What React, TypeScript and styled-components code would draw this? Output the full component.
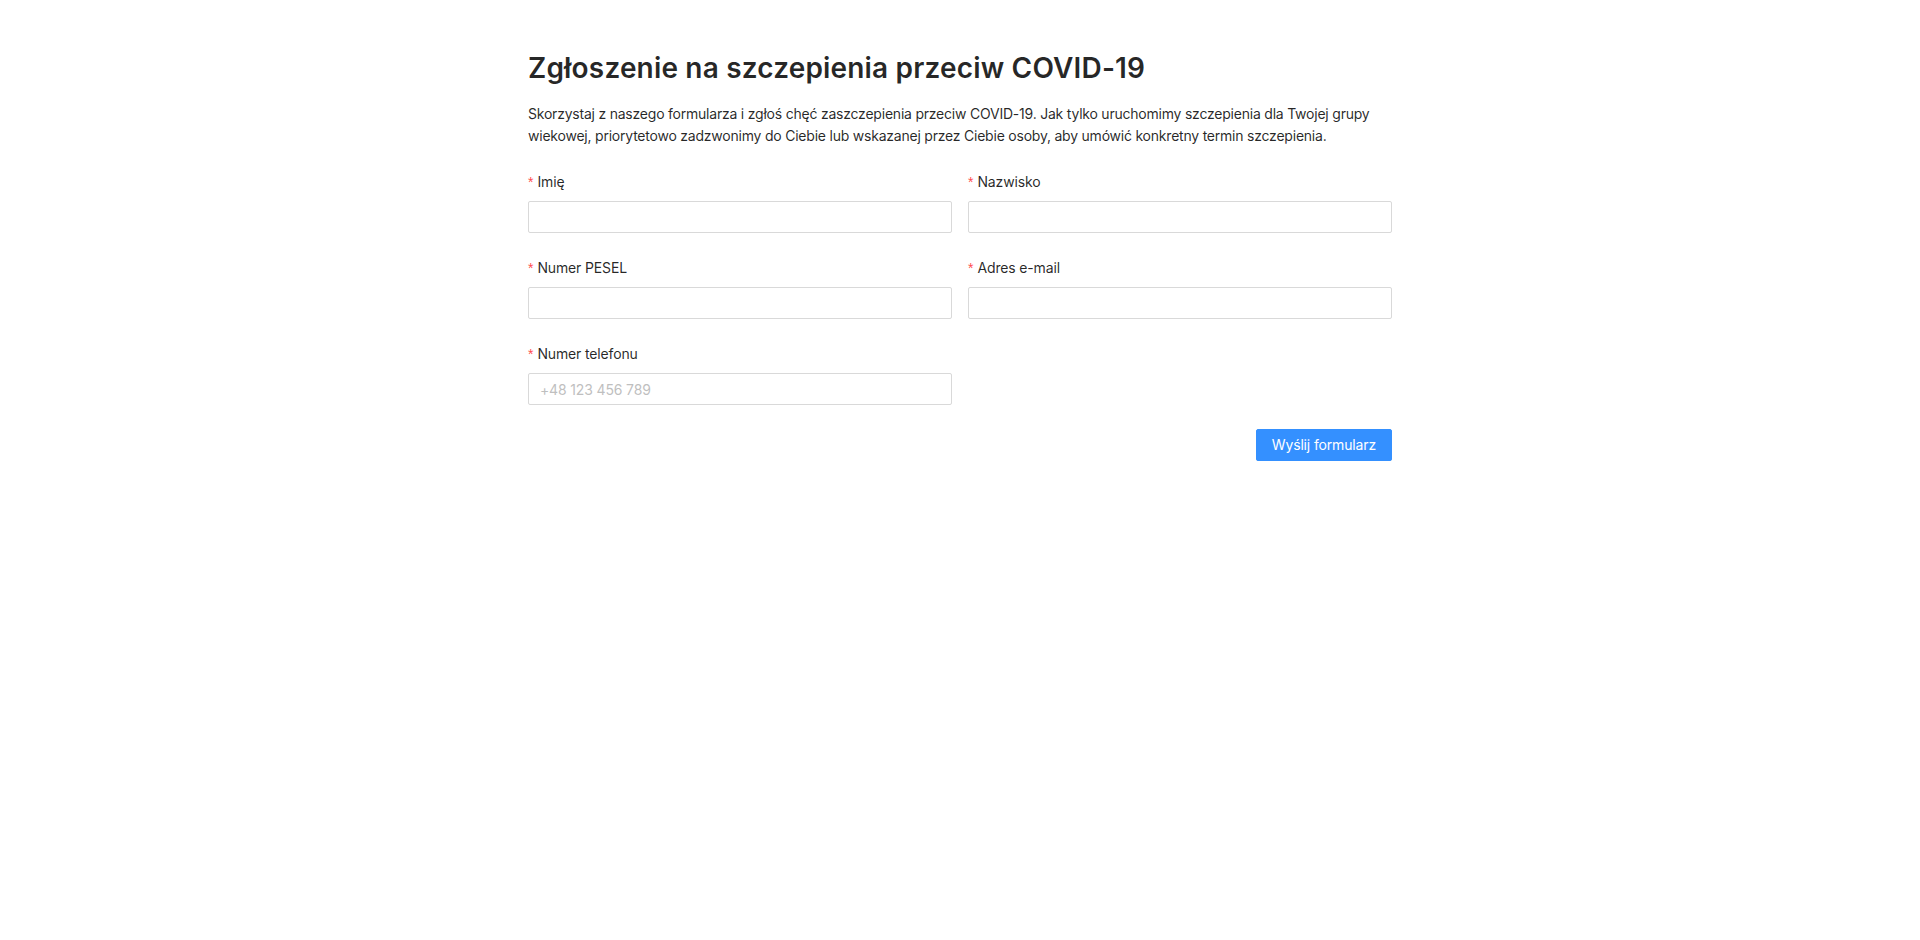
import React from "react";
import styled, { createGlobalStyle } from "styled-components";

const GlobalStyle = createGlobalStyle`
  html, body {
    margin: 0;
    padding: 0;
    background: #ffffff;
  }
  body {
    font-family: Inter, "Noto Sans", "Liberation Sans", sans-serif;
    color: rgba(0, 0, 0, 0.85);
    font-size: 14px;
    line-height: 22px;
    letter-spacing: -0.15px;
  }
  * { box-sizing: border-box; }
`;

const Page = styled.main`
  width: 864px;
  margin: 0 auto;
  padding-top: 49px;
`;

const Title = styled.h1`
  margin: 0 0 16px;
  font-size: 28px;
  line-height: 38px;
  font-weight: 600;
  letter-spacing: 0.17px;
  color: rgba(0, 0, 0, 0.85);
`;

const Lead = styled.p`
  margin: 0 0 24px;
  font-size: 14px;
  line-height: 22px;
  letter-spacing: -0.22px;
`;

const Form = styled.form`
  display: flex;
  flex-direction: column;
`;

const Grid = styled.div`
  display: grid;
  grid-template-columns: 1fr 1fr;
  column-gap: 16px;
`;

const Item = styled.div`
  display: flex;
  flex-direction: column;
  margin-bottom: 24px;
`;

const Label = styled.label`
  display: flex;
  align-items: center;
  height: 22px;
  margin-bottom: 8px;
  font-size: 14px;
  line-height: 22px;
  color: rgba(0, 0, 0, 0.85);
`;

const Required = styled.span`
  display: inline-block;
  margin-right: 4px;
  color: #ff4d4f;
  font-family: "Liberation Sans", sans-serif;
  font-size: 14px;
  line-height: 1;
  letter-spacing: 0;
`;

const Input = styled.input`
  width: 100%;
  height: 32px;
  padding: 4px 11px;
  border: 1px solid #d9d9d9;
  border-radius: 2px;
  font-family: Inter, "Noto Sans", sans-serif;
  font-size: 14px;
  line-height: 22px;
  letter-spacing: -0.15px;
  color: rgba(0, 0, 0, 0.85);
  background: #fff;
  outline: none;
  &::placeholder {
    color: #bfbfbf;
  }
`;

const Actions = styled.div`
  display: flex;
  justify-content: flex-end;
`;

const Button = styled.button`
  height: 32px;
  padding: 4px 15px;
  border: 1px solid #3490ff;
  border-radius: 2px;
  background: #3490ff;
  color: #fff;
  font-family: Inter, "Noto Sans", sans-serif;
  font-size: 14px;
  line-height: 22px;
  letter-spacing: -0.15px;
  box-shadow: 0 2px 0 rgba(0, 0, 0, 0.045);
  cursor: pointer;
`;

type FieldProps = { id: string; label: string; placeholder?: string; type?: string };

const Field = ({ id, label, placeholder, type = "text" }: FieldProps) => (
  <Item>
    <Label htmlFor={id}>
      <Required>*</Required>
      {label}
    </Label>
    <Input id={id} type={type} placeholder={placeholder} />
  </Item>
);

export default function App() {
  return (
    <>
      <GlobalStyle />
      <Page>
        <Title>Zgłoszenie na szczepienia przeciw COVID-19</Title>
        <Lead>
          Skorzystaj z naszego formularza i zgłoś chęć zaszczepienia przeciw COVID-19. Jak tylko uruchomimy
          szczepienia dla Twojej grupy wiekowej, priorytetowo zadzwonimy do Ciebie lub wskazanej przez Ciebie
          osoby, aby umówić konkretny termin szczepienia.
        </Lead>
        <Form onSubmit={(e) => e.preventDefault()}>
          <Grid>
            <Field id="firstName" label="Imię" />
            <Field id="lastName" label="Nazwisko" />
            <Field id="pesel" label="Numer PESEL" />
            <Field id="email" label="Adres e-mail" type="email" />
            <Field id="phone" label="Numer telefonu" placeholder="+48 123 456 789" />
          </Grid>
          <Actions>
            <Button type="submit">Wyślij formularz</Button>
          </Actions>
        </Form>
      </Page>
    </>
  );
}
